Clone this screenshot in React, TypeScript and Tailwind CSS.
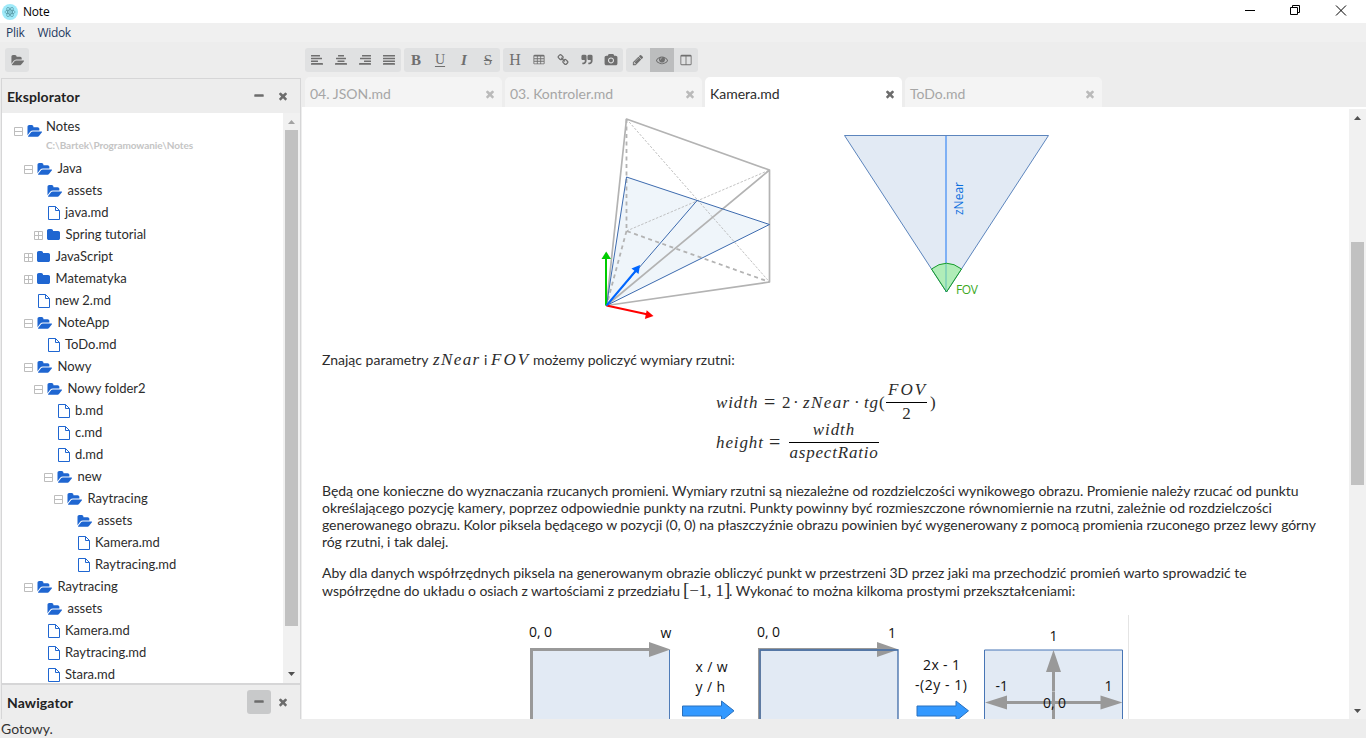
import React from "react";

const PATHS = {
  folderOpen:
    "M1943 952q0 31-31 66l-336 396q-43 51-120.5 86.5t-143.5 35.5h-1088q-34 0-60.5-13t-26.5-43q0-31 31-66l336-396q43-51 120.5-86.5t143.5-35.5h1088q34 0 60.5 13t26.5 43zm-343-344v160h-832q-94 0-197 47.5t-164 119.5l-337 396-5 6q0-4-.5-12.5t-.5-12.5v-960q0-92 66-158t158-66h320q92 0 158 66t66 158v32h544q92 0 158 66t66 158z",
  folder:
    "M1664 608v704q0 92-66 158t-158 66h-1216q-92 0-158-66t-66-158v-960q0-92 66-158t158-66h320q92 0 158 66t66 158v32h672q92 0 158 66t66 158z",
  times:
    "M1490 1322q0 40-28 68l-136 136q-28 28-68 28t-68-28l-294-294-294 294q-28 28-68 28t-68-28l-136-136q-28-28-28-68t28-68l294-294-294-294q-28-28-28-68t28-68l136-136q28-28 68-28t68 28l294 294 294-294q28-28 68-28t68 28l136 136q28 28 28 68t-28 68l-294 294 294 294q28 28 28 68z",
  minus:
    "M1600 736v192q0 40-28 68t-68 28h-1216q-40 0-68-28t-28-68v-192q0-40 28-68t68-28h1216q40 0 68 28t28 68z",
  pencil:
    "M491 1536l91-91-235-235-91 91v107h128v128h107zm523-928q0-22-22-22-10 0-17 7l-542 542q-7 7-7 17 0 22 22 22 10 0 17-7l542-542q7-7 7-17zm-54-192l416 416-832 832h-416v-416zm683 96q0 53-37 90l-166 166-416-416 166-165q36-38 90-38 53 0 91 38l235 234q37 39 37 91z",
  eye: "M1664 960q-152-236-381-353 61 104 61 225 0 185-131.5 316.5t-316.5 131.5-316.5-131.5-131.5-316.5q0-121 61-225-229 117-381 353 133 205 333.5 326.5t434.5 121.5 434.5-121.5 333.5-326.5zm-720-384q0-20-14-34t-34-14q-125 0-214.5 89.5t-89.5 214.5q0 20 14 34t34 14 34-14 14-34q0-86 61-147t147-61q20 0 34-14t14-34zm848 384q0 34-20 69-140 230-376.5 368.5t-499.5 138.5-499.5-139-376.5-368q-20-35-20-69t20-69q140-229 376.5-368t499.5-139 499.5 139 376.5 368q20 35 20 69z",
  columns:
    "M224 1536h608v-1152h-640v1120q0 13 9.5 22.5t22.5 9.5zm1376-32v-1120h-640v1152h608q13 0 22.5-9.5t9.5-22.5zm128-1216v1216q0 66-47 113t-113 47h-1344q-66 0-113-47t-47-113v-1216q0-66 47-113t113-47h1344q66 0 113 47t47 113z",
  link: "M1520 1216q0-40-28-68l-208-208q-28-28-68-28-42 0-72 32 3 3 19 18.5t21.5 21.5 15 19 13 25.5 3.5 27.5q0 40-28 68t-68 28q-15 0-27.5-3.5t-25.5-13-19-15-21.5-21.5-18.5-19q-33 31-33 73 0 40 28 68l206 207q27 27 68 27 40 0 68-26l147-146q28-28 28-67zm-703-705q0-40-28-68l-206-207q-28-28-68-28-39 0-68 27l-147 146q-28 28-28 67 0 40 28 68l208 208q27 27 68 27 42 0 72-31-3-3-19-18.5t-21.5-21.5-15-19-13-25.5-3.5-27.5q0-40 28-68t68-28q15 0 27.5 3.5t25.5 13 19 15 21.5 21.5 18.5 19q33-31 33-73zm895 705q0 120-85 203l-147 146q-83 83-203 83-121 0-204-85l-206-207q-83-83-83-203 0-123 88-209l-88-88q-86 88-208 88-120 0-204-84l-208-208q-84-84-84-204t85-203l147-146q83-83 203-83 121 0 204 85l206 207q83 83 83 203 0 123-88 209l88 88q86-88 208-88 120 0 204 84l208 208q84 84 84 204z",
  quote:
    "M832 320v704q0 104-40.5 198.5t-109.5 163.5-163.5 109.5-198.5 40.5h-64q-26 0-45-19t-19-45v-128q0-26 19-45t45-19h64q106 0 181-75t75-181v-32q0-40-28-68t-68-28h-224q-80 0-136-56t-56-136v-384q0-80 56-136t136-56h384q80 0 136 56t56 136zm896 0v704q0 104-40.5 198.5t-109.5 163.5-163.5 109.5-198.5 40.5h-64q-26 0-45-19t-19-45v-128q0-26 19-45t45-19h64q106 0 181-75t75-181v-32q0-40-28-68t-68-28h-224q-80 0-136-56t-56-136v-384q0-80 56-136t136-56h384q80 0 136 56t56 136z",
  camera:
    "M896 672q119 0 203.5 84.5t84.5 203.5-84.5 203.5-203.5 84.5-203.5-84.5-84.5-203.5 84.5-203.5 203.5-84.5zm704-416q106 0 181 75t75 181v896q0 106-75 181t-181 75h-1408q-106 0-181-75t-75-181v-896q0-106 75-181t181-75h224l51-136q19-49 69.5-84.5t103.5-35.5h512q53 0 103.5 35.5t69.5 84.5l51 136h224zm-704 1152q185 0 316.5-131.5t131.5-316.5-131.5-316.5-316.5-131.5-316.5 131.5-131.5 316.5 131.5 316.5 316.5 131.5z",
  table:
    "M1728 288v1088q0 66-47 113t-113 47h-1344q-66 0-113-47t-47-113v-1088q0-66 47-113t113-47h1344q66 0 113 47t47 113zM192 384v256h384v-256zM704 384v256h384v-256zM1216 384v256h384v-256zM192 768v256h384v-256zM704 768v256h384v-256zM1216 768v256h384v-256zM192 1152v256h384v-256zM704 1152v256h384v-256zM1216 1152v256h384v-256z",
};

function Icon({ name, className }: { name: keyof typeof PATHS; className: string }) {
  return (
    <svg
      viewBox={name === "folderOpen" ? "0 0 1943 1792" : "0 0 1792 1792"}
      preserveAspectRatio="none"
      className={`overflow-visible fill-current ${className}`}
    >
      <path fillRule="evenodd" d={PATHS[name]} />
    </svg>
  );
}

type Node = {
  l: number;
  k: "open" | "closed" | "file";
  t?: "-" | "+";
  n: string;
};

const TREE: Node[] = [
  { l: 1, k: "open", t: "-", n: "Java" },
  { l: 2, k: "open", n: "assets" },
  { l: 2, k: "file", n: "java.md" },
  { l: 2, k: "closed", t: "+", n: "Spring tutorial" },
  { l: 1, k: "closed", t: "+", n: "JavaScript" },
  { l: 1, k: "closed", t: "+", n: "Matematyka" },
  { l: 1, k: "file", n: "new 2.md" },
  { l: 1, k: "open", t: "-", n: "NoteApp" },
  { l: 2, k: "file", n: "ToDo.md" },
  { l: 1, k: "open", t: "-", n: "Nowy" },
  { l: 2, k: "open", t: "-", n: "Nowy folder2" },
  { l: 3, k: "file", n: "b.md" },
  { l: 3, k: "file", n: "c.md" },
  { l: 3, k: "file", n: "d.md" },
  { l: 3, k: "open", t: "-", n: "new" },
  { l: 4, k: "open", t: "-", n: "Raytracing" },
  { l: 5, k: "open", n: "assets" },
  { l: 5, k: "file", n: "Kamera.md" },
  { l: 5, k: "file", n: "Raytracing.md" },
  { l: 1, k: "open", t: "-", n: "Raytracing" },
  { l: 2, k: "open", n: "assets" },
  { l: 2, k: "file", n: "Kamera.md" },
  { l: 2, k: "file", n: "Raytracing.md" },
  { l: 2, k: "file", n: "Stara.md" },
];

function Toggle({ kind }: { kind?: "-" | "+" }) {
  return (
    <svg viewBox="0 0 9 9" className="h-[9px] w-[9px] shrink-0" fill="none" stroke="#bdbdbd">
      {kind && <path d="M.5 .5h8v8h-8zM0 4.5h9" />}
      {kind === "+" && <path d="M4.5 0v9" />}
    </svg>
  );
}

function NodeIcon({ kind }: { kind: Node["k"] }) {
  if (kind === "file")
    return (
      <svg viewBox="0 0 12 14" className="h-[14px] w-3 shrink-0" fill="none" stroke="#1f66d1">
        <path d="M.5 .5h7l4 4v9h-11zM7.5 .5v4h4" />
      </svg>
    );
  if (kind === "open") return <Icon name="folderOpen" className="h-[15px] w-[15px] shrink-0 text-[#1f66d1]" />;
  return <Icon name="folder" className="h-[14px] w-[14px] shrink-0 text-[#1f66d1]" />;
}

function TreeRow({ node }: { node: Node }) {
  return (
    <div className="flex h-[22px] items-center" style={{ paddingLeft: 12 + node.l * 10 }}>
      <Toggle kind={node.t} />
      <div
        className={`flex items-center ${
          node.k === "open"
            ? "ml-[4px] gap-[5.500px]"
            : node.k === "file"
              ? "ml-[5px] gap-[5px]"
              : "ml-[4px] gap-[4.500px]"
        }`}
      >
        <NodeIcon kind={node.k} />
        <span>{node.n}</span>
      </div>
    </div>
  );
}

function Align({ rows }: { rows: [number, number][] }) {
  return (
    <svg viewBox="0 0 12 10" className="h-[10px] w-3 fill-current">
      {rows.map(([x, w], i) => (
        <rect key={i} x={x} y={i * 2.7} width={w} height={1.6} rx={0.3} />
      ))}
    </svg>
  );
}

function Btn({ children, active }: { children: React.ReactNode; active?: boolean }) {
  return <div className={`flex h-6 w-6 items-center justify-center ${active ? "bg-[#bcbdbe]" : ""}`}>{children}</div>;
}

function Group({ children }: { children: React.ReactNode }) {
  return <div className="flex overflow-hidden rounded-[3px] bg-[#e0e1e2]">{children}</div>;
}

function Letter({ children, className }: { children: string; className: string }) {
  return <span className={`font-['Liberation_Serif',serif] leading-none ${className}`}>{children}</span>;
}

function Toolbar() {
  return (
    <div className="flex h-9 shrink-0 items-start pt-[6px] text-[#6f6f6f]">
      <div className="w-[305px] pl-[5px]">
        <div className="flex h-6 w-6 items-center justify-center rounded-[3px] bg-[#e0e1e2]">
          <Icon name="folderOpen" className="h-[13px] w-[13px]" />
        </div>
      </div>
      <div className="flex gap-[3px]">
        <Group>
          <Btn><Align rows={[[0, 9], [0, 11], [0, 7], [0, 12]]} /></Btn>
          <Btn><Align rows={[[3, 6], [1, 10], [2.5, 7], [0, 12]]} /></Btn>
          <Btn><Align rows={[[3, 9], [1, 11], [5, 7], [0, 12]]} /></Btn>
          <Btn><Align rows={[[0, 12], [0, 12], [0, 12], [0, 12]]} /></Btn>
        </Group>
        <Group>
          <Btn><Letter className="text-[15px] font-bold">B</Letter></Btn>
          <Btn><Letter className="text-[14px] underline underline-offset-2">U</Letter></Btn>
          <Btn><Letter className="text-[15px] font-bold italic">I</Letter></Btn>
          <Btn><Letter className="text-[15px] line-through">S</Letter></Btn>
        </Group>
        <Group>
          <Btn><Letter className="text-[16px]">H</Letter></Btn>
          <Btn><Icon name="table" className="h-3 w-3" /></Btn>
          <Btn><Icon name="link" className="h-3 w-3" /></Btn>
          <Btn><Icon name="quote" className="h-3 w-3" /></Btn>
          <Btn><Icon name="camera" className="h-3 w-3" /></Btn>
        </Group>
        <Group>
          <Btn><Icon name="pencil" className="h-3 w-3" /></Btn>
          <Btn active><Icon name="eye" className="h-3 w-3" /></Btn>
          <Btn><Icon name="columns" className="h-3 w-3" /></Btn>
        </Group>
      </div>
    </div>
  );
}

function ScrollArrow({ up, color }: { up?: boolean; color: string }) {
  return (
    <svg viewBox="0 0 17 17" className="h-[17px] w-[17px]" fill={color}>
      <path d={up ? "M5 11h7L8.500 7z" : "M5 7h7L8.500 11z"} />
    </svg>
  );
}

function Sidebar() {
  return (
    <div className="ml-[1px] flex w-[300px] shrink-0 flex-col border-l border-r border-t border-[#d6d6d7]">
      <div className="flex h-[34px] shrink-0 items-center pl-[5px] pr-[11px] font-bold text-[#222]">
        <span className="flex-1 pt-px tracking-[0.100px]">Eksplorator</span>
        <div className="flex gap-3 text-[#6c6c6c]">
          <Icon name="minus" className="h-3 w-3" />
          <Icon name="times" className="h-3 w-3" />
        </div>
      </div>
      <div className="flex h-[570px] shrink-0 bg-white">
        <div className="flex-1 overflow-hidden text-[13px] text-[#2c2c2c]">
          <div className="flex h-[45px] pl-[12px]">
            <div className="flex h-[37px] items-center">
              <Toggle kind="-" />
              <div className="ml-[4px]">
                <NodeIcon kind="open" />
              </div>
            </div>
            <div className="ml-[4px] pt-[4px]">
              <div className="h-[18px] leading-[18px]">Notes</div>
              <div className="h-5 text-[10px] font-bold leading-5 tracking-[-0.060px] text-[#c4c4c4]">
                C:\Bartek\Programowanie\Notes
              </div>
            </div>
          </div>
          {TREE.map((n, i) => (
            <TreeRow key={i} node={n} />
          ))}
        </div>
        <div className="flex w-[17px] flex-col bg-[#f1f1f1]">
          <ScrollArrow up color="#a3a3a3" />
          <div className="mx-[2px] h-[496px] bg-[#c1c1c1]" />
          <div className="flex-1" />
          <div className="pb-[1px]">
            <ScrollArrow color="#505050" />
          </div>
        </div>
      </div>
      <div className="flex flex-1 items-center border-t-2 border-[#d6d6d7] pl-[5px] pr-[11px] font-bold text-[#222]">
        <span className="flex-1 tracking-[0.100px]">Nawigator</span>
        <div className="flex items-center gap-[6px] text-[#6c6c6c]">
          <div className="flex h-6 w-6 items-center justify-center rounded-[3px] bg-[#c8c9ca]">
            <Icon name="minus" className="h-3 w-3" />
          </div>
          <Icon name="times" className="h-3 w-3" />
        </div>
      </div>
    </div>
  );
}

function Tab({ name, active }: { name: string; active?: boolean }) {
  return (
    <div
      className={`flex h-[30px] w-[197px] items-center rounded-t-[5px] pl-[5px] pr-[6px] pt-[3px] ${
        active ? "bg-white text-[#2c2c2c]" : "bg-[#f4f4f4] text-[#a6a6a6]"
      }`}
    >
      <span className="flex-1">{name}</span>
      <Icon name="times" className={`h-3 w-3 ${active ? "text-[#6c6c6c]" : "text-[#bababa]"}`} />
    </div>
  );
}

function M({ children, className = "" }: { children: string; className?: string }) {
  return (
    <span className={`whitespace-nowrap font-['Liberation_Serif',serif] text-[17px] italic leading-none ${className}`}>
      {children}
    </span>
  );
}

function R({ children, className = "" }: { children: string; className?: string }) {
  return (
    <span className={`shrink-0 whitespace-nowrap font-['Liberation_Serif',serif] text-[17px] leading-none ${className}`}>
      {children}
    </span>
  );
}

function CameraFigure() {
  return (
    <svg viewBox="600 107 460 225" className="ml-[298px] h-[225px] w-[460px]" fill="none">
      <path d="M626.500 177L769.500 224.500 606.500 305.500z" fill="#eff5fa" />
      <g stroke="#b3b3b3">
        <path d="M626.500 119L769.500 282M626.500 231L769.500 170" strokeWidth=".8" strokeDasharray="2.500 1.500" />
        <path d="M626.500 119V231L769.500 282M626.500 231L606.500 305.500" strokeWidth="1.800" strokeDasharray="4 3.500" />
        <path d="M606.500 305.500L626.500 119 769.500 170V282zM769.500 170L606.500 305.500" strokeWidth="1.700" strokeLinejoin="round" />
      </g>
      <path d="M606.500 305.500L626.500 177 769.500 224.500zM606.500 305.500L697.500 200" stroke="#3c6aae" />
      <path d="M606 305.500V257" stroke="#00cc00" strokeWidth="2" />
      <path d="M601.500 259h9.500l-4.800-7.500z" fill="#00cc00" />
      <path d="M606.500 305.500L648 314.500" stroke="#f00" strokeWidth="2" />
      <path d="M653.500 316l-6.800-5.800-1.800 8.800z" fill="#f00" />
      <path d="M606.500 305.500L636 270.500" stroke="#06f" strokeWidth="2" />
      <path d="M640 265l-8.500 3.500 7 5.500z" fill="#06f" />

      <path d="M844.500 135.500H1048.500L946.500 292z" fill="#e2eaf4" stroke="#5c85bd" />
      <path d="M946 136V292" stroke="#5c9cf5" strokeWidth="1.500" />
      <path d="M946.500 292L931.500 269Q946.500 257.500 961.500 269z" fill="#90ee90" fillOpacity=".6" stroke="#169c2c" />
      <text
        transform="translate(963 215) rotate(-90)"
        textLength="33"
        fill="#0b6fde"
        className="font-['Open_Sans',sans-serif] text-[12px]"
      >
        zNear
      </text>
      <text x="956" y="294" textLength="22" fill="#3aa81c" className="font-['Open_Sans',sans-serif] text-[12px]">
        FOV
      </text>
    </svg>
  );
}

function Label({ x, y, w, children }: { x: number; y: number; w?: number; children: string }) {
  return (
    <text x={x} y={y} textLength={w} fill="#111" className="font-['Open_Sans',sans-serif] text-[14px]">
      {children}
    </text>
  );
}

function MappingFigure() {
  return (
    <svg viewBox="520 615 610 104" className="ml-[218px] mt-[17px] h-[104px] w-[610px] shrink-0" fill="none">
      <path d="M1128.500 615V719" stroke="#e4e4e4" />
      <path d="M532 650H669.500V719H532z" fill="#e2eaf4" />
      <path d="M669.500 650V719" stroke="#4f7cb8" />
      <path d="M531.500 719V649.500H652" stroke="#999" strokeWidth="3" />
      <path d="M649 642L670.500 649.500 649 657z" fill="#999" />

      <path d="M760 650H898V719H760z" fill="#e2eaf4" />
      <path d="M759.500 719V649.500H880" stroke="#999" strokeWidth="3" />
      <path d="M877 642L898.500 649.500 877 657z" fill="#999" />
      <path d="M760 719V650H898V719" stroke="#3f6ca9" strokeWidth="1.300" />

      <path d="M984.500 650H1122.500V722H984.500z" fill="#e2eaf4" stroke="#4775b5" />
      <path d="M1053.500 719V668M1000 702.500H1108" stroke="#999" strokeWidth="3" />
      <path d="M1053.500 650L1046 672H1061zM985 702.500L1007 695.500V709.500zM1122.500 702.500L1100.500 695.500V709.500z" fill="#999" />
      <path d="M1052 691.500h3" stroke="#ccc" strokeWidth=".7" />

      <g fill="#3399ff" stroke="#2a70bd">
        <path d="M682.500 706H721.500V701L734 710.800 721.500 721V716H682.500z" />
        <path d="M917 706H956V701L968.500 710.800 956 721V716H917z" />
      </g>

      <Label x={529} y={637} w={23}>0, 0</Label>
      <Label x={660.500} y={638}>w</Label>
      <Label x={757} y={637} w={23}>0, 0</Label>
      <Label x={888} y={638}>1</Label>
      <Label x={695.500} y={672} w={32}>x / w</Label>
      <Label x={695.500} y={692} w={29.500}>y / h</Label>
      <Label x={923} y={670} w={37}>2x - 1</Label>
      <Label x={915} y={689.500} w={52}>-(2y - 1)</Label>
      <Label x={1049.500} y={641}>1</Label>
      <Label x={995.500} y={691}>-1</Label>
      <Label x={1104.500} y={691}>1</Label>
      <Label x={1043} y={708} w={23}>0, 0</Label>
    </svg>
  );
}

function Document() {
  return (
    <div className="flex-1 overflow-hidden whitespace-nowrap pl-5 leading-[17px] text-[#2c2c2c]">
      <div className="-ml-5 flex">
        <CameraFigure />
      </div>
      <div className="mt-[19px] flex h-[18px] items-baseline">
        <span className="w-[111px]">Znając parametry</span>
        <M className="w-[51px] tracking-[1.400px]">zNear</M>
        <span className="w-[7px]">i</span>
        <M className="w-[42px] tracking-[2px]">FOV</M>
        <span>możemy policzyć wymiary rzutni:</span>
      </div>

      <div className="ml-[394px] mt-[13px] h-[100px]">
        <div className="flex h-10 items-center">
          <M className="w-[48px] tracking-[0.900px]">width</M>
          <R className="w-[18px] text-[20px]">=</R>
          <R className="w-[11px]">2</R>
          <R className="w-[10px]">·</R>
          <M className="w-[51px] tracking-[1.400px]">zNear</M>
          <R className="w-[10px]">·</R>
          <M className="tracking-[0.900px]">tg</M>
          <R className="w-[7px]">(</R>
          <span className="flex w-[41px] flex-col items-center">
            <M className="-mt-[2px] h-[21px] pl-[2px] tracking-[2px]">FOV</M>
            <span className="h-px w-full bg-black" />
            <R className="h-[19px] pt-[2px]">2</R>
          </span>
          <R className="ml-[3px]">)</R>
        </div>
        <div className="flex h-10 items-center">
          <M className="w-[53px] tracking-[0.900px]">height</M>
          <R className="w-5 text-[20px]">=</R>
          <span className="flex w-[90px] flex-col items-center">
            <M className="-mt-[2px] h-[21px] tracking-[0.900px]">width</M>
            <span className="h-px w-full bg-black" />
            <M className="h-[19px] pt-px tracking-[0.800px]">aspectRatio</M>
          </span>
        </div>
      </div>

      <div className="tracking-[-0.055px]">
        <p>
          Będą one konieczne do wyznaczania rzucanych promieni. Wymiary rzutni są niezależne od rozdzielczości wynikowego
          obrazu. Promienie należy rzucać od punktu
          <br />
          <span className="tracking-[-0.040px]">
            określającego pozycję kamery, poprzez odpowiednie punkty na rzutni. Punkty powinny być rozmieszczone
            równomiernie na rzutni, zależnie od rozdzielczości
          </span>
          <br />
          <span className="tracking-[-0.070px]">
            generowanego obrazu. Kolor piksela będącego w pozycji (0, 0) na płaszczyźnie obrazu powinien być wygenerowany
            z pomocą promienia rzuconego przez lewy górny
          </span>
          <br />
          róg rzutni, i tak dalej.
        </p>
        <p className="mt-[14px]">
          Aby dla danych współrzędnych piksela na generowanym obrazie obliczyć punkt w przestrzeni 3D przez jaki ma
          przechodzić promień warto sprowadzić te
        </p>
        <div className="-mt-px flex h-[18px] items-baseline">
          <span>współrzędne do układu o osiach z wartościami z przedziału</span>
          <span className="ml-[3px] flex w-[46px] shrink-0 items-baseline">
            <R className="text-[19px]">[</R>
            <R className="text-[17px] tracking-[-0.100px]">−1, 1</R>
            <R className="text-[19px]">]</R>
          </span>
          <span>. Wykonać to można kilkoma prostymi przekształceniami:</span>
        </div>
      </div>
      <div className="-ml-5">
        <MappingFigure />
      </div>
    </div>
  );
}

function TitleBar() {
  return (
    <div className="flex h-[23px] shrink-0 items-center bg-white">
      <svg viewBox="0 0 16 16" className="ml-[2px] h-4 w-4">
        <circle cx="8" cy="8" r="8" fill="#9feaf9" />
        <g fill="none" stroke="#4b8a96" strokeWidth=".6">
          <ellipse cx="8" cy="8" rx="5.200" ry="2" />
          <ellipse cx="8" cy="8" rx="5.200" ry="2" transform="rotate(60 8 8)" />
          <ellipse cx="8" cy="8" rx="5.200" ry="2" transform="rotate(120 8 8)" />
        </g>
        <circle cx="8" cy="8" r=".7" fill="#4b8a96" />
      </svg>
      <span className="ml-[5px] flex-1 font-['Open_Sans',sans-serif] text-[12px] tracking-[-0.200px] text-black">Note</span>
      <svg viewBox="1240 0 110 20" className="mb-[3px] mr-4 h-5 w-[110px]" fill="none" stroke="#000">
        <path d="M1245 10.500h10M1290.500 7.500h7v7h-7zM1292.500 7.500v-2h7v7h-2M1336 5.500l10 10M1346 5.500l-10 10" />
      </svg>
    </div>
  );
}

export default function App() {
  return (
    <div className="flex h-[738px] w-[1366px] flex-col overflow-hidden bg-[#ededed] font-['Lato',sans-serif] text-[14px]">
      <TitleBar />
      <div className="flex h-[19px] shrink-0 items-center gap-[13px] bg-[#f0f0f0] pl-[6px] font-['Open_Sans',sans-serif] text-[12px] tracking-[-0.300px] text-[#1f3a5f]">
        <span>Plik</span>
        <span>Widok</span>
      </div>
      <Toolbar />
      <div className="flex h-[641px] shrink-0">
        <Sidebar />
        <div className="ml-[1px] flex flex-1 flex-col">
          <div className="-mt-[1px] flex h-[30px] shrink-0 gap-[3px] pl-[3px]">
            <Tab name="04. JSON.md" />
            <Tab name="03. Kontroler.md" />
            <Tab name="Kamera.md" active />
            <Tab name="ToDo.md" />
          </div>
          <div className="flex h-[612px] shrink-0 bg-white">
            <Document />
            <div className="mt-[2px] flex w-[17px] shrink-0 flex-col bg-[#f1f1f1]">
              <ScrollArrow up color="#505050" />
              <div className="mx-[2px] mt-[116px] h-[243px] bg-[#c1c1c1]" />
              <div className="flex-1" />
              <ScrollArrow color="#505050" />
            </div>
          </div>
        </div>
      </div>
      <div className="flex h-[19px] shrink-0 items-center pl-px leading-[19px] text-[#333]">Gotowy.</div>
    </div>
  );
}
